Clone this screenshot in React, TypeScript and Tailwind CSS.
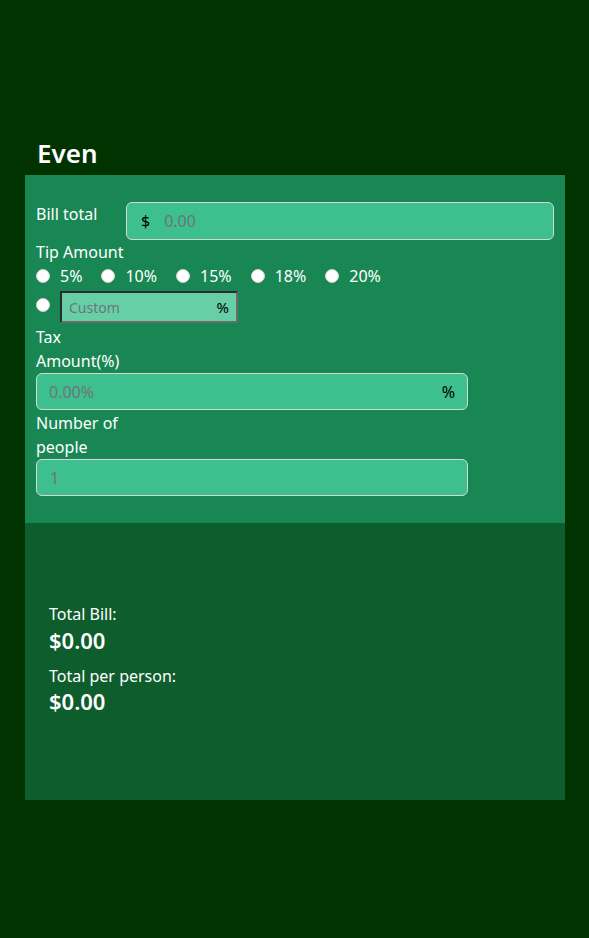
import React from 'react'

const tips = ['5%', '10%', '15%', '18%', '20%']

function Radio() {
  return <span className="inline-block w-[14px] h-[14px] rounded-full bg-white border border-[#d0d0d0] shrink-0" />
}

export default function App() {
  return (
    <div
      className="min-h-[938px] w-full bg-[#003300] text-white pt-[136px] px-[25px] text-[16px]"
      style={{ fontFamily: '"Noto Sans", "Open Sans", sans-serif' }}
    >
      <h1 className="text-[26px] font-semibold leading-[35px] pl-[12px] mb-[4px]">Even</h1>

      {/* Inputs */}
      <div className="bg-[#198754] px-[11px] pt-[27px] pb-[27px] w-[540px]">
        <div className="flex items-start">
          <label className="w-[90px] leading-[24px] shrink-0">Bill total</label>
          <div className="flex items-center h-[38px] w-[428px] rounded-[6px] bg-[#3dbf8e] border border-[#d6d6d6] pl-[14px]">
            <span className="text-black">$</span>
            <span className="ml-[14px] text-[#6c757d]">0.00</span>
          </div>
        </div>

        <div className="leading-[24px]">Tip Amount</div>
        <div className="flex items-center h-[24px]">
          {tips.map((t) => (
            <div key={t} className="flex items-center mr-[19px]">
              <Radio />
              <span className="ml-[10px]">{t}</span>
            </div>
          ))}
        </div>
        <div className="flex items-start mt-[3px]">
          <span className="mt-[3px]"><Radio /></span>
          <div className="ml-[10px] flex items-center justify-between h-[32px] w-[178px] bg-[#66cfa6] border-2 border-[#2b2b2b] border-r-[#6b6b6b] border-b-[#6b6b6b] px-[7px]">
            <span className="text-[#6c757d] text-[14px]">Custom</span>
            <span className="text-black text-[15px]">%</span>
          </div>
        </div>

        <div className="w-[90px] leading-[24px] mt-[2px]">Tax Amount(%)</div>
        <div className="flex items-center justify-between h-[37px] w-[432px] rounded-[6px] bg-[#3dbf8e] border border-[#d6d6d6] px-[12px]">
          <span className="text-[#6c757d]">0.00%</span>
          <span className="text-black">%</span>
        </div>

        <div className="w-[90px] leading-[24px] mt-[1px]">Number of people</div>
        <div className="flex items-center h-[37px] w-[432px] rounded-[6px] bg-[#3dbf8e] border border-[#d6d6d6] px-[13px]">
          <span className="text-[#6c757d]">1</span>
        </div>
      </div>

      {/* Results */}
      <div className="bg-[#0d5e2c] w-[540px] h-[277px] px-[24px] pt-[79px]">
        <div className="leading-[24px]">Total Bill:</div>
        <div className="text-[22px] font-semibold leading-[30px] -mt-[1px]">$0.00</div>
        <div className="leading-[24px] mt-[9px]">Total per person:</div>
        <div className="text-[22px] font-semibold leading-[30px] -mt-[2px]">$0.00</div>
      </div>
    </div>
  )
}
